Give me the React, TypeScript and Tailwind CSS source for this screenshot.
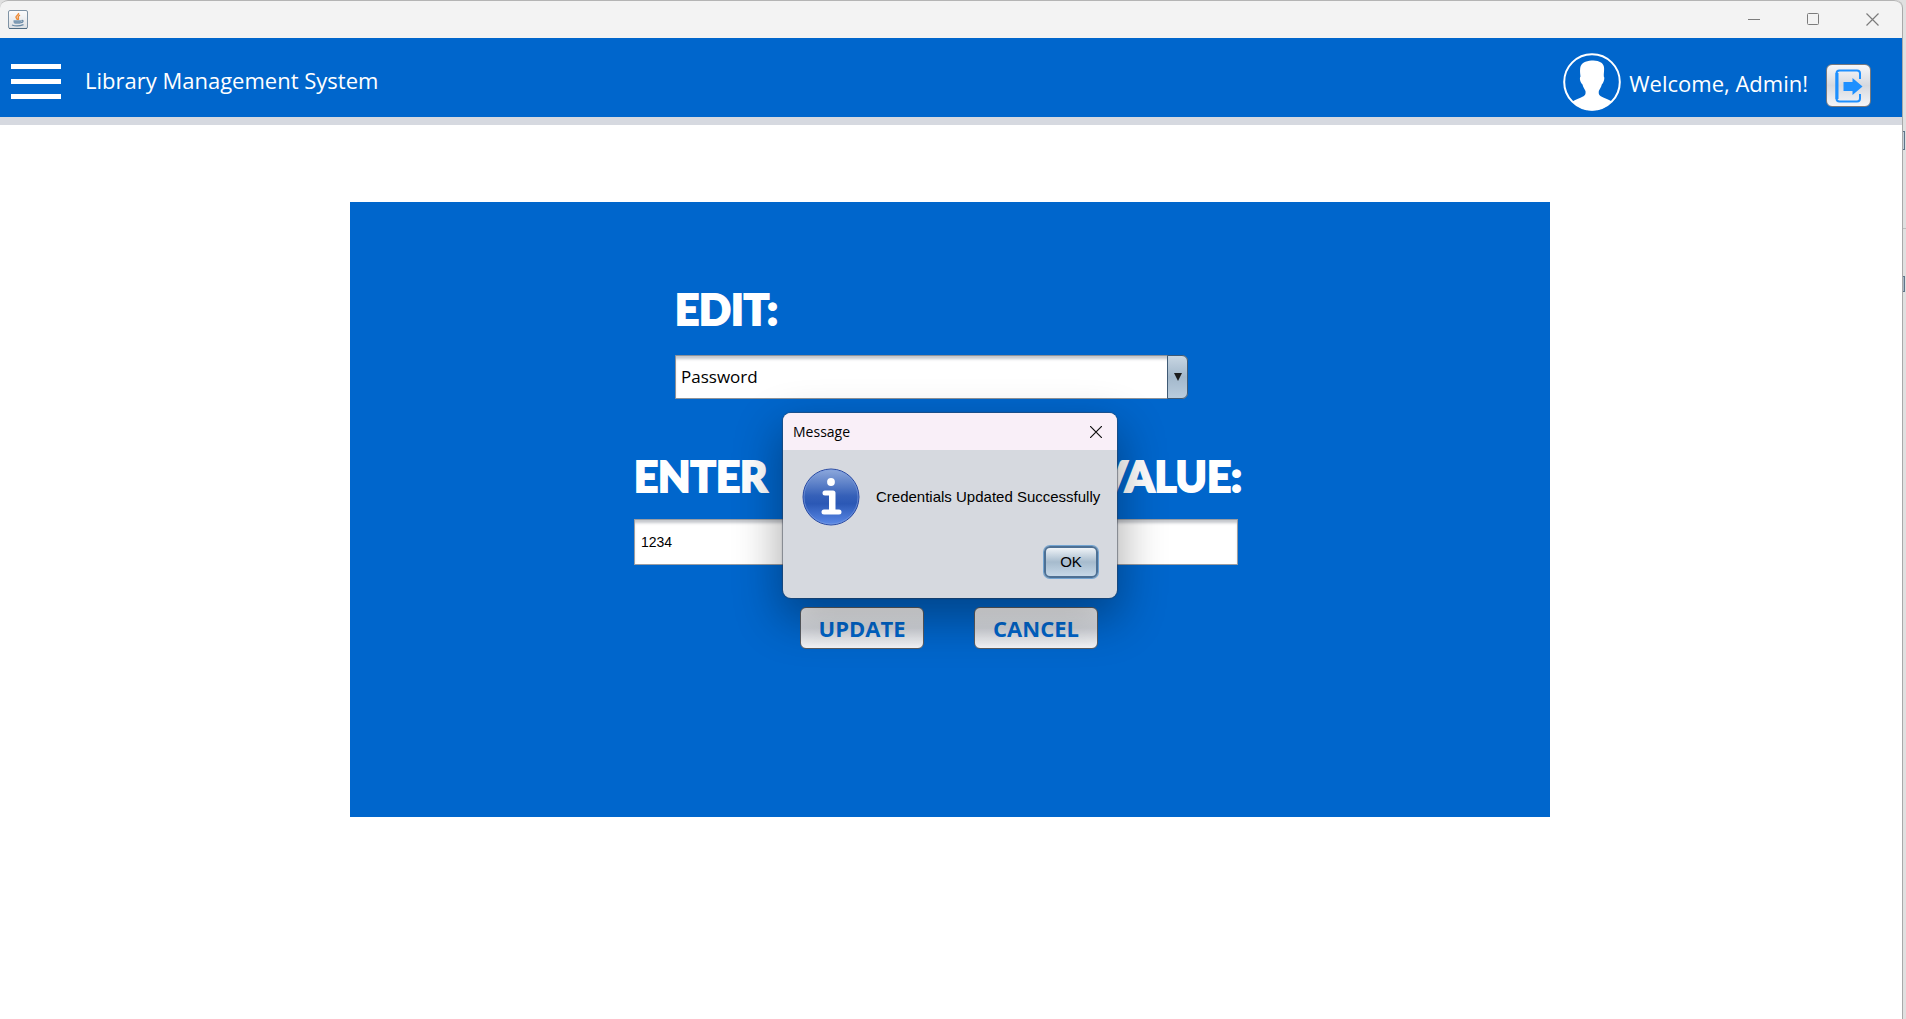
import { useState } from "react";

function JavaIcon() {
  return (
    <svg width="20" height="19" viewBox="0 0 20 19" aria-hidden="true">
      <defs>
        <linearGradient id="javaBg" x1="0" y1="0" x2="0" y2="1">
          <stop offset="0" stopColor="#fdfdfd" />
          <stop offset="1" stopColor="#dcdfe3" />
        </linearGradient>
      </defs>
      <rect x="0.5" y="0.5" width="19" height="18" rx="1.5" fill="url(#javaBg)" stroke="#7f93a5" />
      <path d="M1 18.5h18" stroke="#4f6b82" />
      <path d="M10.500 3c1 1.600-3 2.600-2.500 4.300.2.900 1.200 1.500 1.400 2.700M12 5c-1.600 1-2.300 1.600-1.700 2.700.4.800.5 1.200-.2 2" fill="none" stroke="#ee8a35" strokeWidth="1.400" />
      <path d="M5.500 10.300h8v1.500c0 1.500-1 2-2.500 2H8c-1.500 0-2.500-.6-2.500-2z" fill="#7d9ab3" />
      <path d="M13.500 10.500c2.300-.4 2 1.800-.5 2.200M4 15c3 1.200 8 1 11.500-.4" fill="none" stroke="#6888a4" strokeWidth="1.200" />
    </svg>
  );
}

function Avatar() {
  return (
    <svg width="58" height="58" viewBox="0 0 58 58" aria-hidden="true">
      <circle cx="29" cy="29" r="27.800" fill="none" stroke="#fff" strokeWidth="2" />
      <path
        d="M28.500 7.500c4-.4 7 .5 9.500 2 3 2 3.500 5 3 9-.2 2-.3 3.500-.2 5 1 1 .4 3.500-.4 5.500-.5 1.300-1 1.800-1.600 2.500-.7 2.800-2 4.500-3 6.500-.3 3 .1 4 2 5.200 4 2.400 8.500 3.500 11 5.300C43.500 54 37 57.500 29 57.500S14.500 54 9.500 48.500c2.500-1.800 7-2.900 11-5.300 1.900-1.200 2.300-2.200 2-5.200-1-2-2.300-3.700-3-6.500-.6-.7-1.300-1.200-1.800-2.500-.8-2-1.200-4.500-.2-5.500-.1-2-.8-4.500-.3-8.500C18 10 22.500 8 28.500 7.500z"
        fill="#fff"
      />
    </svg>
  );
}

function LogoutIcon() {
  return (
    <svg width="28" height="34" viewBox="0 0 28 34" fill="none" aria-hidden="true">
      <path d="M25 10V4.500c0-2-1-3-3-3H4.500c-2 0-3 1-3 3v25c0 2 1 3 3 3H22c2 0 3-1 3-3V25" stroke="#1e90ff" strokeWidth="2" />
      <path d="M2 4v26" stroke="#1e90ff" strokeWidth="3" />
      <path d="M8.500 13h9V9l10 8.500-10 8.500v-4h-9z" fill="#1e90ff" />
    </svg>
  );
}

function InfoIcon() {
  return (
    <svg className="shrink-0" width="58" height="58" viewBox="0 0 58 58" aria-hidden="true">
      <defs>
        <linearGradient id="infoBg" x1="0" y1="0" x2="0" y2="1">
          <stop offset="0" stopColor="#8ea9dc" />
          <stop offset="0.48" stopColor="#3560b8" />
          <stop offset="0.62" stopColor="#2b58b5" />
          <stop offset="1" stopColor="#5c8ae8" />
        </linearGradient>
      </defs>
      <circle cx="29" cy="29" r="28" fill="url(#infoBg)" stroke="#2848a0" />
      <circle cx="29" cy="29" r="27" fill="none" stroke="#7d9fdf" strokeOpacity="0.6" />
      <circle cx="29" cy="14" r="3.900" fill="#fff" />
      <path d="M23 25h8v19M22 44h15" fill="none" stroke="#fff" strokeWidth="5" strokeLinecap="round" strokeLinejoin="round" />
      <path d="M27 24h6v20h-6z" fill="#fff" />
    </svg>
  );
}

function TitleBar() {
  return (
    <div className="flex h-[38px] items-center justify-between rounded-t-lg border-t border-[#b4b4b4] bg-[#f3f3f3] pr-[23px] pl-2">
      <JavaIcon />
      <div className="flex items-center gap-[46px] text-[#7c7c7c]">
        <button type="button" aria-label="Minimize">
          <svg width="13" height="13" viewBox="0 0 13 13"><path d="M0 6.500h12" stroke="currentColor" /></svg>
        </button>
        <button type="button" aria-label="Maximize">
          <svg width="13" height="13" viewBox="0 0 13 13"><rect x="0.5" y="0.5" width="11" height="11" rx="1" fill="none" stroke="currentColor" /></svg>
        </button>
        <button type="button" aria-label="Close">
          <svg width="13" height="13" viewBox="0 0 13 13"><path d="M.5.500l12 12M12.500.500l-12 12" stroke="currentColor" strokeWidth="1.200" /></svg>
        </button>
      </div>
    </div>
  );
}

function Header() {
  return (
    <header className="flex h-[87px] items-center justify-between border-b-8 border-[#d6d9e0] bg-[#0066cc] pr-[31px] pl-[11px] text-white">
      <div className="flex items-center gap-6">
        <button type="button" aria-label="Menu" className="mt-2 flex w-[50px] flex-col gap-2.5">
          <span className="h-[5px] w-full bg-white" />
          <span className="h-[5px] w-full bg-white" />
          <span className="h-[5px] w-full bg-white" />
        </button>
        <h1 className="mt-1 font-['Open_Sans','Noto_Sans',sans-serif] text-[22px] leading-8">Library Management System</h1>
      </div>
      <div className="flex items-center gap-2">
        <span className="mt-2"><Avatar /></span>
        <span className="mt-2.5 font-['Open_Sans','Noto_Sans',sans-serif] text-[22px] leading-8">Welcome, Admin!</span>
        <button
          type="button"
          aria-label="Log out"
          className="mt-4 ml-2.5 flex h-[43px] w-[45px] items-center justify-center rounded-md border border-[#77797e] bg-linear-to-b from-[#f7f8fa] via-[#d6d9df] to-[#f4f5f8]"
        >
          <LogoutIcon />
        </button>
      </div>
    </header>
  );
}

const headingClass =
  "font-['Lato','Open_Sans',sans-serif] text-[42px] leading-[52px] font-black whitespace-nowrap text-white [-webkit-text-stroke:2px_white]";
const actionClass =
  "h-[42px] w-[124px] rounded-md border border-[#5a5d63] bg-linear-to-b from-[#f4f5f7] via-[#d6d9df] to-[#f8f8fa] font-['Open_Sans','Noto_Sans',sans-serif] text-[22px] leading-7 font-bold text-[#0066cc]";

function CredentialsForm() {
  const [field, setField] = useState("Password");
  const [value, setValue] = useState("1234");
  return (
    <form className="ml-[284px] w-[608px]" onSubmit={(e) => e.preventDefault()}>
      <div className="ml-[41px] w-[513px]">
        <label htmlFor="field" className={`block ${headingClass}`}>EDIT:</label>
        <div className="relative mt-5 h-[44px]">
          <select
            id="field"
            value={field}
            onChange={(e) => setField(e.target.value)}
            className="h-full w-full appearance-none rounded-r-md border border-[#8d9299] bg-white px-[5px] font-['Open_Sans','Noto_Sans',sans-serif] text-[17px] text-black shadow-[inset_0_4px_3px_-1px_#c4c7cc]"
          >
            <option>Password</option>
            <option>Username</option>
          </select>
          <span className="pointer-events-none absolute inset-y-0 right-0 flex w-[21px] items-center justify-center rounded-r-md border border-[#3f5a75] bg-linear-to-b from-[#c8d6e2] via-[#a3b8cb] to-[#b9ccdd]">
            <svg width="8" height="8" viewBox="0 0 8 8" aria-hidden="true"><path d="M0 0h8L4 8z" fill="#1c1c1c" /></svg>
          </span>
        </div>
      </div>
      <label htmlFor="value" className={`mt-[51px] flex justify-between ${headingClass}`}>
        <span>ENTER</span>
        <span>THE</span>
        <span>UPDATED</span>
        <span>VALUE:</span>
      </label>
      <input
        id="value"
        value={value}
        onChange={(e) => setValue(e.target.value)}
        className="mt-[17px] block h-[46px] w-[604px] border border-[#9a9da3] bg-white px-1.5 font-['Liberation_Sans',sans-serif] text-[14px] text-black shadow-[inset_0_4px_3px_-1px_#c4c7cc]"
      />
      <div className="mt-[42px] ml-[166px] flex gap-[50px]">
        <button type="submit" className={actionClass}>UPDATE</button>
        <button type="button" className={actionClass}>CANCEL</button>
      </div>
    </form>
  );
}

function MessageDialog() {
  return (
    <div
      role="dialog"
      aria-labelledby="message-title"
      className="absolute inset-x-0 top-[211px] mx-auto w-[334px] overflow-hidden rounded-lg bg-[#d6d9df] shadow-[0_18px_46px_4px_rgba(0,0,0,0.32),0_0_1px_1px_rgba(60,70,90,0.5)]"
    >
      <div className="flex h-[37px] items-center justify-between bg-[#f9eff8] pr-[15px] pl-2.5">
        <h2 id="message-title" className="font-['Open_Sans','Noto_Sans',sans-serif] text-[14px] text-black">Message</h2>
        <button type="button" aria-label="Close message">
          <svg width="12" height="12" viewBox="0 0 12 12"><path d="M0 0l12 12M12 0L0 12" stroke="#111" strokeWidth="1.200" /></svg>
        </button>
      </div>
      <div className="px-[19px] pt-[18px] pb-5">
        <div className="flex items-center gap-4">
          <InfoIcon />
          <p className="font-['Liberation_Sans',sans-serif] text-[15px] whitespace-nowrap text-black">Credentials Updated Successfully</p>
        </div>
        <div className="mt-5 flex justify-end">
          <button
            type="button"
            className="h-8 w-[54px] rounded-md border-2 border-[#4d7094] bg-linear-to-b from-[#eff3f7] via-[#a6bbcd] to-[#c6d8e8] font-['Liberation_Sans',sans-serif] text-[15px] text-black shadow-[0_0_0_1px_#73a4d1]"
          >
            OK
          </button>
        </div>
      </div>
    </div>
  );
}

function BackgroundWindowEdge() {
  return (
    <div className="w-[3px] shrink-0 bg-[#e0e0e0] pt-[131px]" aria-hidden="true">
      <div className="h-[19px] w-0.5 border-y border-r border-[#5f7488] bg-[#c5d0da]" />
      <div className="mt-[78px] h-px bg-[#bdbdbd]" />
      <div className="mt-[47px] h-4 w-0.5 border-y border-r border-[#5f7488] bg-[#a9b8c5]" />
    </div>
  );
}

export default function App() {
  return (
    <div className="flex min-h-screen bg-[#e0e0e0]">
      <div className="min-w-0 flex-1 rounded-t-lg border-r border-[#a9a9a9] bg-white">
        <TitleBar />
        <Header />
        <main className="pt-[77px] pr-[42px] pl-10">
          <section className="relative mx-auto w-full max-w-[1200px] bg-[#0066cc] pt-[81px] pb-[168px]">
            <CredentialsForm />
            <MessageDialog />
          </section>
        </main>
      </div>
      <BackgroundWindowEdge />
    </div>
  );
}
